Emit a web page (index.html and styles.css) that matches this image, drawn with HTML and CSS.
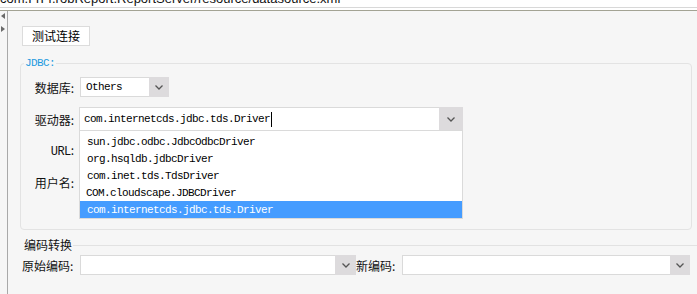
FILE: index.html
```html
<!DOCTYPE html>
<html lang="zh">
<head>
<meta charset="utf-8">
<link rel="stylesheet" href="styles.css">
</head>
<body>
<div class="topbar"><div class="path">com.FrFr.robReport.ReportServer/resource/datasource.xml</div></div>
<div class="sep"></div>
<div class="main">
  <div class="side">
    <svg class="arrow" width="4" height="6" viewBox="0 0 4 6"><path d="M4 0 L0 3 L4 6 Z" fill="#6a6a6a"/></svg>
    <svg class="arrow arrow-right" width="4" height="6" viewBox="0 0 4 6"><path d="M0 0 L4 3 L0 6 Z" fill="#6a6a6a"/></svg>
  </div>
  <div class="content">
    <button class="btn">测试连接</button>
    <fieldset class="jdbc">
      <legend class="jdbc-legend">JDBC:</legend>
      <div class="row row-db">
        <div class="label">数据库:</div>
        <div class="combo combo-db">
          <div class="combo-text mono">Others</div>
          <div class="combo-btn"><svg width="8" height="5" viewBox="0 0 8 5"><path d="M0.5 0.5 L4 4 L7.5 0.5" fill="none" stroke="#555" stroke-width="1.3"/></svg></div>
        </div>
      </div>
      <div class="row row-driver">
        <div class="label">驱动器:</div>
        <div class="combo combo-driver">
          <div class="combo-text mono">com.internetcds.jdbc.tds.Driver<span class="caret"></span></div>
          <div class="combo-btn"><svg width="8" height="5" viewBox="0 0 8 5"><path d="M0.5 0.5 L4 4 L7.5 0.5" fill="none" stroke="#555" stroke-width="1.3"/></svg></div>
          <ul class="dropdown mono">
            <li>sun.jdbc.odbc.JdbcOdbcDriver</li>
            <li>org.hsqldb.jdbcDriver</li>
            <li>com.inet.tds.TdsDriver</li>
            <li class="item-alt">COM.cloudscape.JDBCDriver</li>
            <li class="selected">com.internetcds.jdbc.tds.Driver</li>
          </ul>
        </div>
      </div>
      <div class="row row-url">
        <div class="label"><span class="mono url">URL</span>:</div>
      </div>
      <div class="row row-user">
        <div class="label">用户名:</div>
      </div>
    </fieldset>
    <div class="enc-head">
      <div class="enc-title">编码转换</div>
      <div class="enc-line"></div>
    </div>
    <div class="enc-row">
      <div class="enc-label">原始编码:</div>
      <div class="combo combo-src">
        <div class="combo-text"></div>
        <div class="combo-btn"><svg width="8" height="5" viewBox="0 0 8 5"><path d="M0.5 0.5 L4 4 L7.5 0.5" fill="none" stroke="#555" stroke-width="1.3"/></svg></div>
      </div>
      <div class="enc-label enc-label-new">新编码:</div>
      <div class="combo combo-new">
        <div class="combo-text"></div>
        <div class="combo-btn"><svg width="8" height="5" viewBox="0 0 8 5"><path d="M0.5 0.5 L4 4 L7.5 0.5" fill="none" stroke="#555" stroke-width="1.3"/></svg></div>
      </div>
    </div>
  </div>
</div>
</body>
</html>
```
FILE: styles.css
```css
* { box-sizing: border-box; }
html, body {
  margin: 0;
  padding: 0;
}
body {
  width: 697px;
  height: 294px;
  overflow: hidden;
  background: #f6f6f6;
  font-family: "Noto Sans CJK SC", "Liberation Sans", sans-serif;
  font-size: 12px;
  color: #111;
}
.mono {
  font-family: "Liberation Mono", "DejaVu Sans Mono", monospace;
  font-size: 11px;
  letter-spacing: -0.6px;
}
.topbar {
  height: 8px;
  background: #fff;
  border-bottom: 1px solid #d8d8d8;
  overflow: hidden;
}
.path {
  font-family: "Liberation Sans", sans-serif;
  font-size: 13px;
  line-height: 13px;
  margin-top: -8px;
  color: #111;
  white-space: nowrap;
}
.sep {
  height: 3px;
  background: #fff;
  border-bottom: 1px solid #a3a394;
}
.main {
  display: flex;
  height: 283px;
}
.side {
  width: 8px;
  border-right: 1px solid #a9a9a9;
  display: flex;
  flex-direction: column;
  padding: 2px 0 0 1px;
}
.arrow { display: block; }
.arrow-right { margin-top: 7px; }
.content {
  flex: 1;
  padding: 15px 5px 0 12px;
}
.btn {
  display: block;
  margin: 0 0 0 2px;
  width: 68px;
  height: 20px;
  border: 1px solid #dcdcdc;
  background: #fff;
  font-family: "Noto Sans CJK SC", sans-serif;
  font-size: 12px;
  line-height: 16px;
  color: #000;
  padding: 0;
}
.jdbc {
  margin: 11px 0 0 0;
  padding: 8px 0 37px 0;
  border: 1px solid #e3e3e3;
  border-radius: 4px;
  min-width: 0;
}
.jdbc-legend {
  margin-left: 3px;
  padding: 0 1px;
  color: #1d9ae0;
  font-family: "Liberation Mono", monospace;
  font-size: 11px;
  line-height: 12px;
  letter-spacing: -0.6px;
}
.row {
  display: flex;
  align-items: center;
}
.label {
  width: 53px;
  margin-right: 5px;
  text-align: right;
  white-space: nowrap;
  color: #111;
}
.url { font-size: 12px; }
.row-db { height: 20px; }
.row-driver { height: 24px; margin-top: 10px; }
.row-url { height: 20px; margin-top: 9px; }
.row-user { height: 20px; margin-top: 12px; }
.combo {
  display: flex;
  position: relative;
  border: 1px solid #dadada;
  background: #fff;
}
.combo-text {
  flex: 1;
  display: flex;
  align-items: center;
  white-space: nowrap;
  color: #000;
}
.combo-btn {
  width: 20px;
  margin: -1px -1px -1px 0;
  background: #dddbdd;
  display: flex;
  align-items: center;
  justify-content: center;
}
.combo-db {
  width: 89px;
  height: 20px;
  margin-left: 1px;
}
.combo-db .combo-text { padding-left: 5px; }
.combo-driver {
  width: 384px;
  height: 24px;
}
.combo-driver .combo-text { padding-left: 4px; }
.combo-driver .combo-btn { width: 24px; }
.caret {
  display: inline-block;
  width: 1px;
  height: 15px;
  background: #000;
  margin-left: 1px;
}
.dropdown {
  position: absolute;
  top: 100%;
  left: -1px;
  width: 384px;
  margin: 0;
  padding: 2px 0 0 0;
  list-style: none;
  background: #fff;
  border: 1px solid #dadada;
  z-index: 5;
}
.dropdown li {
  height: 17px;
  line-height: 18px;
  padding-left: 7px;
  color: #000;
  white-space: nowrap;
}
.dropdown .item-alt { padding-left: 6px; }
.dropdown .selected {
  background: #459cff;
  color: #fff;
}
.enc-head {
  display: flex;
  align-items: center;
  margin: 8px -5px 0 4px;
  height: 14px;
}
.enc-title {
  line-height: 14px;
  color: #111;
}
.enc-line {
  flex: 1;
  height: 1px;
  margin-left: 1px;
  background: #e2e2e2;
}
.enc-row {
  display: flex;
  align-items: center;
  margin: 3px 0 0 2px;
  height: 20px;
}
.enc-label {
  width: 58px;
  white-space: nowrap;
  color: #111;
}
.enc-label-new {
  width: 46px;
}
.combo-src {
  width: 276px;
  height: 20px;
}
.combo-src .combo-btn { width: 21px; }
.combo-new {
  width: 288px;
  height: 20px;
}
```
